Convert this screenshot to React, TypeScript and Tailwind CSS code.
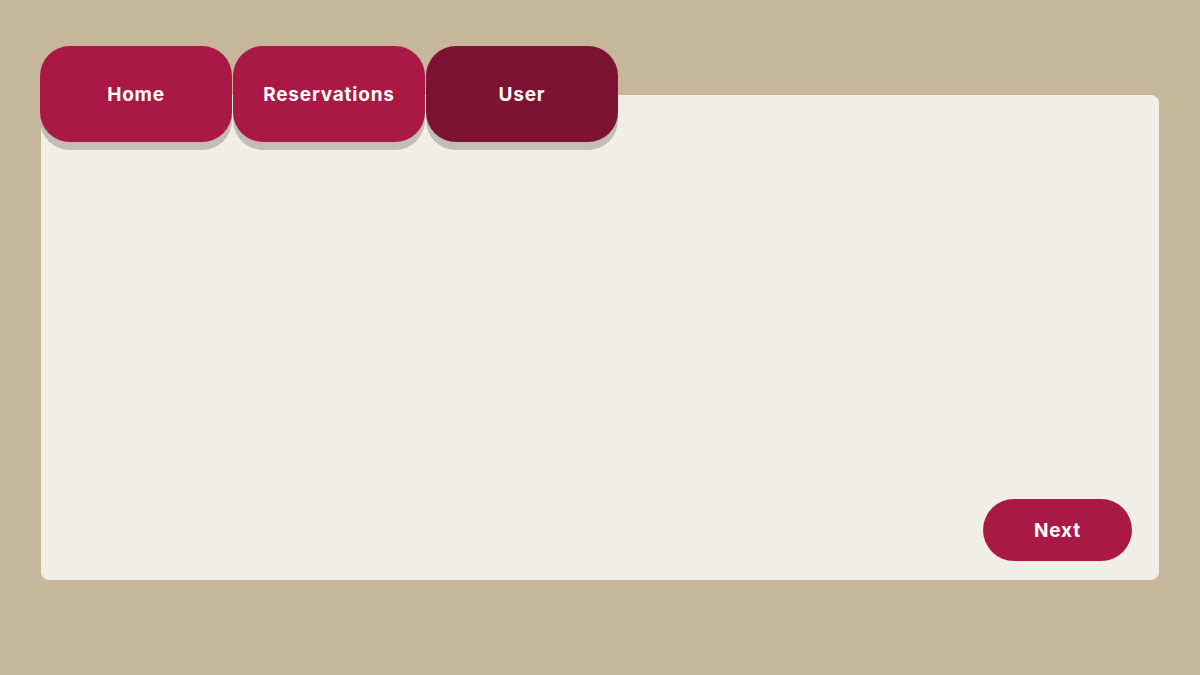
export default function App() {
  const tabs = [
    { label: 'Home', active: false },
    { label: 'Reservations', active: false },
    { label: 'User', active: true },
  ];

  return (
    <div
      className="w-[1200px] h-[675px] bg-[#c6b69a] pt-[95px] pl-[41px]"
      style={{ fontFamily: 'Inter, "Liberation Sans", sans-serif' }}
    >
      <div className="w-[1118px] h-[485px] bg-[#f1eee8] rounded-lg flex flex-col">
        <div className="flex gap-px -mt-[49px] -ml-px">
          {tabs.map((t) => (
            <button
              key={t.label}
              className={
                'w-[192px] h-[96px] pt-[2px] rounded-[30px] text-white font-bold text-[19px] tracking-[0.8px] shadow-[0_8px_0_#c2bdb7] ' +
                (t.active ? 'bg-[#7d1332]' : 'bg-[#aa1945]')
              }
            >
              {t.label}
            </button>
          ))}
        </div>
        <div className="flex-1" />
        <div className="flex justify-end pr-[27px] pb-[19px]">
          <button className="w-[149px] h-[62px] pt-[2px] rounded-full bg-[#aa1945] text-white font-bold text-[19px] tracking-[0.8px]">
            Next
          </button>
        </div>
      </div>
    </div>
  );
}
